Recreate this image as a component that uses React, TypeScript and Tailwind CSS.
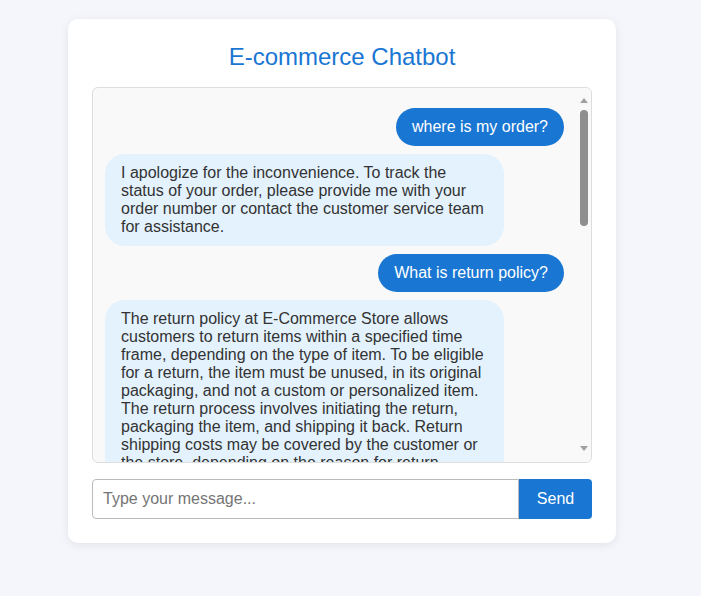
import React from "react";

type Msg = { from: "user" | "bot"; text: string };

const messages: Msg[] = [
  { from: "user", text: "where is my order?" },
  {
    from: "bot",
    text: "I apologize for the inconvenience. To track the status of your order, please provide me with your order number or contact the customer service team for assistance.",
  },
  { from: "user", text: "What is return policy?" },
  {
    from: "bot",
    text: "The return policy at E-Commerce Store allows customers to return items within a specified time frame, depending on the type of item. To be eligible for a return, the item must be unused, in its original packaging, and not a custom or personalized item. The return process involves initiating the return, packaging the item, and shipping it back. Return shipping costs may be covered by the customer or the store, depending on the reason for return.",
  },
  { from: "user", text: "How long does shipping take?" },
  {
    from: "bot",
    text: "Standard shipping usually takes 3 to 7 business days, depending on your location. Express shipping options are available at checkout for faster delivery.",
  },
];

function Scrollbar() {
  // classic scrollbar look: arrows + thumb, scrolled to the top
  return (
    <div className="flex w-[15px] shrink-0 flex-col items-center bg-[#f9f9f9] pt-[10px] pb-[11px]">
      <div className="h-0 w-0 border-x-4 border-b-[5px] border-x-transparent border-b-[#a0a0a0]" />
      <div className="mt-[7px] h-[116px] w-2 rounded-full bg-[#8f8f8f]" />
      <div className="flex-1" />
      <div className="h-0 w-0 border-x-4 border-t-[5px] border-x-transparent border-t-[#a0a0a0]" />
    </div>
  );
}

export default function App() {
  return (
    <div className="min-h-screen bg-[#f4f6fb] pt-[19px] pl-[68px] font-['Liberation_Sans',Arial,sans-serif]">
      <div className="w-[548px] rounded-[10px] bg-white p-6 shadow-[0_2px_10px_rgba(0,0,0,0.08)]">
        <h2 className="mb-4 text-center text-[24px] leading-[28px] font-normal text-[#1976d2]">
          E-commerce Chatbot
        </h2>

        <div className="flex h-[376px] overflow-hidden rounded-[6px] border border-[#ddd] bg-[#f9f9f9]">
          <div className="min-w-0 flex-1 overflow-hidden px-3 py-3">
            {messages.map((m, i) =>
              m.from === "user" ? (
                <div key={i} className="my-2 flex justify-end">
                  <div className="box-content max-w-[80%] rounded-[20px] bg-[#1976d2] px-4 py-[10px] text-[16px] leading-[18px] text-white">
                    {m.text}
                  </div>
                </div>
              ) : (
                <div key={i} className="my-2 flex justify-start">
                  <div className="box-content max-w-[80%] rounded-[20px] bg-[#e3f2fd] px-4 py-[10px] text-[16px] leading-[18px] text-[#333]">
                    {m.text}
                  </div>
                </div>
              )
            )}
          </div>
          <Scrollbar />
        </div>

        <div className="mt-4 flex">
          <input
            type="text"
            placeholder="Type your message..."
            className="h-10 flex-1 rounded-l-[4px] border border-[#bbb] bg-white px-[10px] text-[16px] text-[#333] outline-none placeholder:text-[#757575]"
          />
          <button className="h-10 w-[73px] rounded-r-[4px] bg-[#1976d2] text-[16px] text-white">
            Send
          </button>
        </div>
      </div>
    </div>
  );
}
